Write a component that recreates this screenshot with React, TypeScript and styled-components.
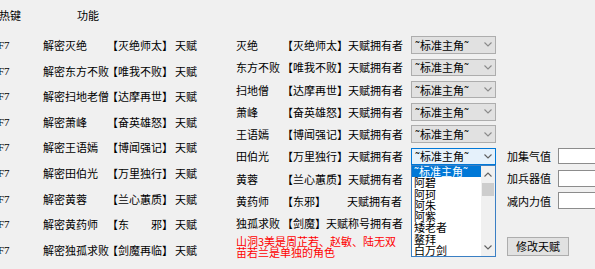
import React from 'react';
import styled, { createGlobalStyle } from 'styled-components';

const GlobalStyle = createGlobalStyle`
  html, body {
    margin: 0;
    padding: 0;
    background: #f0f0f0;
  }
  body {
    font-family: "Noto Sans CJK SC", "Noto Sans", sans-serif;
    font-size: 11px;
    color: #000;
  }
`;

const unlocks = [
  { name: '解密灭绝', talent: '【灭绝师太】' },
  { name: '解密东方不败', talent: '【唯我不败】' },
  { name: '解密扫地老僧', talent: '【达摩再世】' },
  { name: '解密萧峰', talent: '【奋英雄怒】' },
  { name: '解密王语嫣', talent: '【博闻强记】' },
  { name: '解密田伯光', talent: '【万里独行】' },
  { name: '解密黄蓉', talent: '【兰心蕙质】' },
  { name: '解密黄药师', talent: '【东　　邪】' },
  { name: '解密独孤求败', talent: '【剑魔再临】' },
];

const heroes = [
  { name: '灭绝', talent: '【灭绝师太】', owner: '天赋拥有者' },
  { name: '东方不败', talent: '【唯我不败】', owner: '天赋拥有者' },
  { name: '扫地僧', talent: '【达摩再世】', owner: '天赋拥有者' },
  { name: '萧峰', talent: '【奋英雄怒】', owner: '天赋拥有者' },
  { name: '王语嫣', talent: '【博闻强记】', owner: '天赋拥有者' },
  { name: '田伯光', talent: '【万里独行】', owner: '天赋拥有者' },
  { name: '黄蓉', talent: '【兰心蕙质】', owner: '天赋拥有者' },
  { name: '黄药师', talent: '【东邪】', owner: '天赋拥有者' },
  { name: '独孤求败', talent: '【剑魔】', owner: '天赋称号拥有者' },
];

const OPEN_ROW = 5;
const DEFAULT_ROLE = '˜标准主角˜';
const roleOptions = [DEFAULT_ROLE, '阿碧', '阿珂', '阿朱', '阿紫', '矮老者', '鳌拜', '白万剑'];

const fields = ['加集气值', '加兵器值', '减内力值'];

const Window = styled.div`
  display: flex;
  width: 595px;
  height: 269px;
  overflow: hidden;
  background: #f0f0f0;
`;

/* ---------- left: hotkey list ---------- */

const LeftPanel = styled.div`
  width: 236px;
  flex-shrink: 0;
`;

const Header = styled.div`
  display: grid;
  grid-template-columns: 78px auto;
  box-sizing: border-box;
  height: 32.2px;
  padding-top: 8px;
  margin-left: -1px;
  line-height: 14px;
`;

const HotkeyRow = styled.div`
  display: grid;
  grid-template-columns: 45px 64px 68px auto;
  align-items: center;
  height: 25.6px;
  margin-left: -2px;
  white-space: nowrap;
`;

const Key = styled.span`
  font-family: "Liberation Serif", serif;
  font-size: 11px;
`;

/* ---------- middle: hero rows with combos ---------- */

const MidPanel = styled.div`
  width: 271px;
  flex-shrink: 0;
  padding-top: 33.85px;
`;

const HeroRow = styled.div`
  display: flex;
  align-items: center;
  height: 22.3px;
`;

const HeroInfo = styled.div`
  display: grid;
  grid-template-columns: 46px 1fr auto;
  width: 166px;
  margin-right: 9px;
  white-space: nowrap;
`;

const ComboWrap = styled.div`
  position: relative;
`;

const Combo = styled.div<{ $focused?: boolean }>`
  display: flex;
  align-items: center;
  justify-content: space-between;
  box-sizing: border-box;
  width: 85px;
  height: 17.5px;
  padding: 0 3px 0 3px;
  border: 1px solid ${(p) => (p.$focused ? '#0078d7' : '#adadad')};
  background: ${(p) => (p.$focused ? '#e5f1fb' : '#e1e1e1')};
  color: ${(p) => (p.$focused ? '#606060' : '#8a8a8a')};
  white-space: nowrap;
`;

const ComboText = styled.span`
  color: #000;
`;

const DropList = styled.div`
  position: absolute;
  top: 100%;
  left: 0;
  z-index: 5;
  display: flex;
  box-sizing: border-box;
  width: 85px;
  height: 92px;
  border: 1px solid #3a7fc4;
  background: #fff;
`;

const Options = styled.div`
  flex: 1;
  display: flex;
  flex-direction: column;
`;

const Option = styled.div<{ $selected?: boolean }>`
  height: 11.25px;
  line-height: 11.25px;
  padding-left: 2px;
  font-size: 11px;
  white-space: nowrap;
  background: ${(p) => (p.$selected ? '#0078d7' : 'transparent')};
  color: ${(p) => (p.$selected ? '#fff' : '#000')};
`;

const ScrollBar = styled.div`
  display: flex;
  flex-direction: column;
  width: 14px;
  background: #f0f0f0;
  color: #606060;
`;

const ScrollArrow = styled.div`
  display: flex;
  align-items: center;
  justify-content: center;
  height: 17px;
`;

const ScrollTrack = styled.div`
  flex: 1;
`;

const ScrollThumb = styled.div`
  height: 13px;
  margin: 0 1px;
  background: #cdcdcd;
`;

const Note = styled.div`
  margin-top: 1px;
  color: #ff0000;
  line-height: 11.3px;
  white-space: nowrap;
`;

/* ---------- right: value fields ---------- */

const RightPanel = styled.div`
  flex: 1;
  padding-top: 144.85px;
`;

const FieldRow = styled.div`
  display: flex;
  align-items: center;
  height: 22.3px;
`;

const FieldLabel = styled.span`
  width: 51px;
  flex-shrink: 0;
`;

const FieldInput = styled.div`
  flex-shrink: 0;
  box-sizing: border-box;
  width: 50px;
  height: 16.6px;
  border: 1px solid #8c8c8c;
  background: #fff;
`;

const Button = styled.div`
  display: flex;
  align-items: center;
  justify-content: center;
  box-sizing: border-box;
  width: 62px;
  height: 19.5px;
  margin-top: 25px;
  border: 1px solid #adadad;
  background: #e1e1e1;
`;

const Chevron = ({ up = false }: { up?: boolean }) => (
  <svg width="8" height="5" viewBox="0 0 8 5">
    <path
      d={up ? 'M0.5 4.5 L4 1 L7.5 4.5' : 'M0.5 0.5 L4 4 L7.5 0.5'}
      fill="none"
      stroke="currentColor"
      strokeWidth="1.1"
    />
  </svg>
);

export default function App() {
  return (
    <Window>
      <GlobalStyle />
      <LeftPanel>
        <Header>
          <span>热键</span>
          <span>功能</span>
        </Header>
        {unlocks.map((u) => (
          <HotkeyRow key={u.name}>
            <Key>F7</Key>
            <span>{u.name}</span>
            <span>{u.talent}</span>
            <span>天赋</span>
          </HotkeyRow>
        ))}
      </LeftPanel>

      <MidPanel>
        {heroes.map((h, i) => (
          <HeroRow key={h.name}>
            <HeroInfo>
              <span>{h.name}</span>
              <span>{h.talent}</span>
              <span>{h.owner}</span>
            </HeroInfo>
            <ComboWrap>
              <Combo $focused={i === OPEN_ROW}>
                <ComboText>{DEFAULT_ROLE}</ComboText>
                <Chevron />
              </Combo>
              {i === OPEN_ROW && (
                <DropList>
                  <Options>
                    {roleOptions.map((r, j) => (
                      <Option key={r} $selected={j === 0}>
                        {r}
                      </Option>
                    ))}
                  </Options>
                  <ScrollBar>
                    <ScrollArrow>
                      <Chevron up />
                    </ScrollArrow>
                    <ScrollThumb />
                    <ScrollTrack />
                    <ScrollArrow>
                      <Chevron />
                    </ScrollArrow>
                  </ScrollBar>
                </DropList>
              )}
            </ComboWrap>
          </HeroRow>
        ))}
        <Note>
          山洞3美是周芷若、赵敏、陆无双
          <br />
          苗若兰是单独的角色
        </Note>
      </MidPanel>

      <RightPanel>
        {fields.map((f) => (
          <FieldRow key={f}>
            <FieldLabel>{f}</FieldLabel>
            <FieldInput />
          </FieldRow>
        ))}
        <Button>修改天赋</Button>
      </RightPanel>
    </Window>
  );
}
